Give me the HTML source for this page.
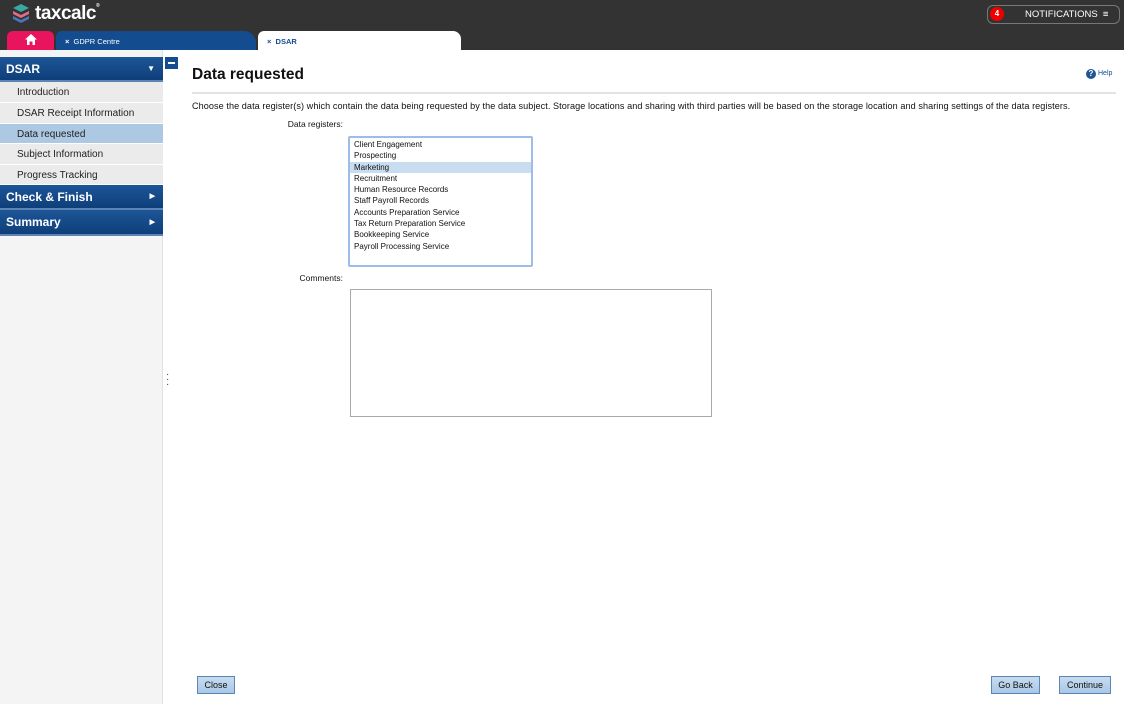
<!DOCTYPE html>
<html><head><style>
*{margin:0;padding:0;box-sizing:border-box}
body{width:1124px;height:704px;overflow:hidden;font-family:"Liberation Sans",sans-serif;background:#fff;position:relative}
.top{position:absolute;left:0;top:0;width:1124px;height:50px;background:#333}
.abs{position:absolute}
.side{position:absolute;left:0;top:50px;width:163px;height:654px;background:#f4f4f4;border-right:1px solid #e0e0e0}
.hdr{position:absolute;left:0;width:163px;background:linear-gradient(#1d5597,#0e3f7a);color:#fff;font-weight:bold;font-size:12px;padding-left:6px;border-bottom:2px solid #5d84b5}
.item{position:absolute;left:0;width:163px;height:20px;background:#ebebeb;font-size:10px;color:#222;padding:5px 0 0 17px;border-bottom:1px solid #fff}
.btn{position:absolute;top:676px;height:18px;background:linear-gradient(#c8dcf0,#a9c7e6);border:1px solid #5b86b8;font-size:9px;color:#111;text-align:center;line-height:16px}
.li{font-size:8px;color:#111;height:11.3px;line-height:11.3px;padding-left:4px}
.lbl{position:absolute;font-size:8.5px;color:#111;text-align:right;width:150px}
</style></head><body>
<div class="top"></div>
<svg class="abs" style="left:11px;top:3px" width="20" height="22" viewBox="0 0 20 22">
<path d="M10 1 L18 5 L10 9 L2 5Z" fill="#3aa7a0"/><path d="M2 8 L10 12 L18 8 L18 11 L10 15 L2 11Z" fill="#e36b8a"/><path d="M2 13 L10 17 L18 13 L18 16 L10 20 L2 16Z" fill="#4a76b8"/></svg>
<div class="abs" style="left:35px;top:3px;color:#fff;font-size:19px;font-weight:bold;letter-spacing:-0.5px">taxcalc<span style="font-size:5px;vertical-align:top">®</span></div>
<div class="abs" style="left:987px;top:5px;width:133px;height:19px;border:1px solid #777;border-radius:6px"></div>
<div class="abs" style="left:990px;top:7px;width:14px;height:14px;border-radius:7px;background:#e00;color:#fff;font-size:8px;font-weight:bold;text-align:center;line-height:14px">4</div>
<div class="abs" style="left:1025px;top:9px;color:#fff;font-size:9.5px">NOTIFICATIONS &nbsp;≡</div>
<div class="abs" style="left:7px;top:31px;width:47px;height:19px;background:#e8155e;border-radius:6px 6px 0 0"></div>
<svg class="abs" style="left:25px;top:34px" width="12" height="11" viewBox="0 0 12 11"><path d="M6 0L12 5.5H10V11H7.5V7.5H4.5V11H2V5.5H0Z" fill="#fff"/></svg>
<div class="abs" style="left:56px;top:31px;width:200px;height:19px;background:#134d8f;border-radius:6px 12px 0 0;color:#fff;font-size:7.5px;padding:6px 0 0 9px"><b>×</b>&nbsp; GDPR Centre</div>
<div class="abs" style="left:258px;top:31px;width:203px;height:19px;background:#fff;border-radius:6px 8px 0 0;color:#134d8f;font-size:7.5px;font-weight:bold;padding:6px 0 0 9px">×&nbsp; DSAR</div>
<div class="side"></div>
<div class="hdr" style="top:57px;height:25px;line-height:24px">DSAR<span style="position:absolute;right:8px;font-size:8px">▼</span></div>
<div class="item" style="top:82px;height:21px">Introduction</div>
<div class="item" style="top:103px;height:21px">DSAR Receipt Information</div>
<div class="item" style="top:124px;height:20px;background:#adc8e2">Data requested</div>
<div class="item" style="top:144px;height:21px">Subject Information</div>
<div class="item" style="top:165px;height:20px">Progress Tracking</div>
<div class="hdr" style="top:185px;height:25px;line-height:24px">Check &amp; Finish<span style="position:absolute;right:8px;font-size:7px">▶</span></div>
<div class="hdr" style="top:210px;height:26px;line-height:25px">Summary<span style="position:absolute;right:8px;font-size:7px">▶</span></div>
<div class="abs" style="left:165px;top:57px;width:13px;height:12px;background:#134d8f"><div style="margin:5px 3px 0;height:2px;background:#fff"></div></div>
<div class="abs" style="left:166px;top:372px;color:#336;font-size:10px;line-height:5px">·<br>·<br>·</div>
<div class="abs" style="left:192px;top:66px;font-size:15.5px;font-weight:bold;color:#111">Data requested</div>
<div class="abs" style="left:1086px;top:69px;width:10px;height:10px;border-radius:5px;background:#1d5597;color:#fff;font-size:8px;font-weight:bold;text-align:center;line-height:10px">?</div>
<div class="abs" style="left:1098px;top:70px;font-size:7px;color:#134d8f">Help</div>
<div class="abs" style="left:192px;top:92px;width:924px;height:2px;background:#e3e3e3"></div>
<div class="abs" style="left:192px;top:101px;font-size:9.1px;letter-spacing:0.07px;color:#111;white-space:nowrap">Choose the data register(s) which contain the data being requested by the data subject. Storage locations and sharing with third parties will be based on the storage location and sharing settings of the data registers.</div>
<div class="lbl" style="left:193px;top:119px">Data registers:</div>
<div class="abs" style="left:348px;top:136px;width:185px;height:131px;border:2px solid #9dbde8;border-radius:2px;background:#fff;padding-top:1px">
<div class="li">Client Engagement</div><div class="li">Prospecting</div><div class="li" style="background:#c9ddf1">Marketing</div><div class="li">Recruitment</div><div class="li">Human Resource Records</div><div class="li">Staff Payroll Records</div><div class="li">Accounts Preparation Service</div><div class="li">Tax Return Preparation Service</div><div class="li">Bookkeeping Service</div><div class="li">Payroll Processing Service</div></div>
<div class="lbl" style="left:193px;top:273px">Comments:</div>
<div class="abs" style="left:350px;top:289px;width:362px;height:128px;border:1px solid #aaa"></div>
<div class="btn" style="left:197px;width:38px">Close</div>
<div class="btn" style="left:991px;width:49px">Go Back</div>
<div class="btn" style="left:1059px;width:52px">Continue</div>
</body></html>
